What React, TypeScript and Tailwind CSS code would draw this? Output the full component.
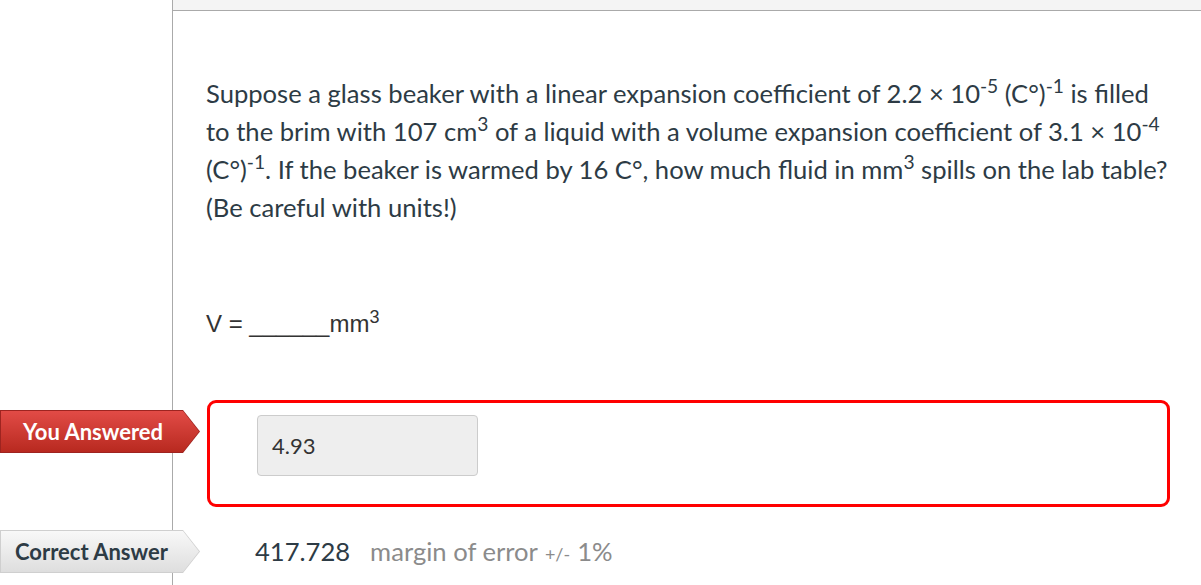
export default function App() {
  return (
    <div className="h-[585px] w-[1201px] overflow-hidden bg-white font-['Lato','Noto_Sans',sans-serif] text-[#2d3b45]">
      <div className="ml-[172px] flex h-full flex-col border-l border-[#aaaaaa]">
        <div className="h-[11px] shrink-0 border-b border-[#aaaaaa] bg-[#f4f4f4]" />

        <div className="w-[1000px] pl-[33px] pt-[63px] text-[25.6px] leading-[38px]">
          Suppose a glass beaker with a linear expansion coefficient of 2.2 × 10<sup>-5</sup> (C°)<sup>-1</sup> is
          filled to the brim with 107 cm<sup>3</sup> of a liquid with a volume expansion coefficient of 3.1 × 10
          <sup>-4</sup> (C°)<sup>-1</sup>. If the beaker is warmed by 16 C°, how much fluid in mm<sup>3</sup> spills
          on the lab table? (Be careful with units!)
        </div>

        <div className="mt-[83px] pl-[33px] font-['Liberation_Sans',Arial,sans-serif] text-[24px] leading-[30px] text-[#333]">
          V = ______mm<sup>3</sup>
        </div>

        <div className="-ml-[173px] mt-[61px] flex items-start gap-[7px]">
          <div className="mt-[10px] h-[43px] w-[200px] shrink-0 bg-[#9e2420] p-[1px] [clip-path:polygon(0_0,183px_0,200px_50%,183px_100%,0_100%)]">
            <div className="flex h-full items-center bg-gradient-to-b from-[#e24b46] to-[#b8291f] pl-[22px] text-[22px] font-bold text-white [clip-path:polygon(0_0,182px_0,198px_50%,182px_100%,0_100%)]">
              You Answered
            </div>
          </div>
          <div className="h-[107px] w-[963px] rounded-[9px] border-[3px] border-[#ff0000] pl-[47px] pt-[12px]">
            <div className="flex h-[61px] w-[221px] items-center rounded-[4px] border border-[#cccccc] bg-[#eeeeee] px-[14px] text-[22px] text-[#333]">
              4.93
            </div>
          </div>
        </div>

        <div className="-ml-[173px] mt-[23px] flex items-center gap-[55px]">
          <div className="h-[43px] w-[200px] shrink-0 bg-[#cfcfcf] p-[1px] [clip-path:polygon(0_0,183px_0,200px_50%,183px_100%,0_100%)]">
            <div className="flex h-full items-center bg-gradient-to-b from-[#f8f8f8] to-[#dedede] pl-[14px] text-[22px] font-bold text-[#2d3b45] [clip-path:polygon(0_0,182px_0,198px_50%,182px_100%,0_100%)]">
              Correct Answer
            </div>
          </div>
          <div className="flex items-baseline text-[25.6px]">
            <span className="text-[#2d3b45]">417.728</span>
            <span className="ml-[20px] text-[#8b8b8b]">margin of error</span>
            <span className="ml-[7px] text-[18px] text-[#8b8b8b]">+/-</span>
            <span className="ml-[7px] text-[#8b8b8b]">1%</span>
          </div>
        </div>
      </div>
    </div>
  );
}
